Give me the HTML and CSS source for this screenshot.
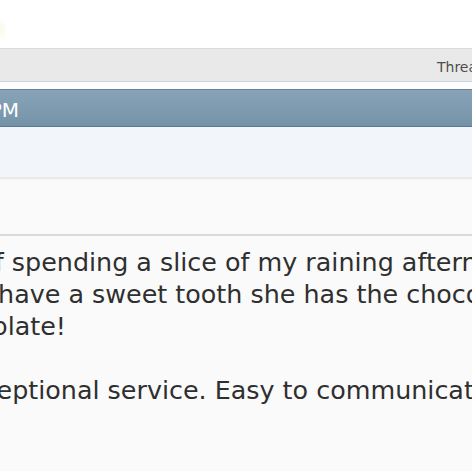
FILE: index.html
```html
<!DOCTYPE html>
<html>
<head>
<meta charset="utf-8">
<link rel="stylesheet" href="styles.css">
</head>
<body>
<div class="page">
  <header class="logo-area"><span class="logo-blob"></span></header>
  <nav class="navbar"><span class="nav-link">Thread Tools</span></nav>
  <div class="gap"></div>
  <div class="blockhead"><span class="date">, 05:12 PM</span></div>
  <div class="userinfo"></div>
  <div class="postmeta"></div>
  <div class="postbody">
    <p class="line">s of spending a slice of my raining afternoon</p>
    <p class="line">If I have a sweet tooth she has the chocolate</p>
    <p class="line">to plate!</p>
    <p class="line blank">&nbsp;</p>
    <p class="line line-indent">xceptional service. Easy to communicate with</p>
  </div>
</div>
</body>
</html>
```
FILE: styles.css
```css
html, body {
  margin: 0;
  padding: 0;
  background: #fafafa;
  overflow: hidden;
}
.page {
  width: 472px;
  height: 471px;
  overflow: hidden;
  font-family: "DejaVu Sans", Verdana, sans-serif;
}
.logo-area {
  height: 48px;
  background: #ffffff;
  position: relative;
}
.logo-blob {
  position: absolute;
  left: -6px;
  top: 12px;
  width: 12px;
  height: 34px;
  border-radius: 50%;
  background: radial-gradient(circle, #fbfaee 0%, #ffffff 80%);
}
.navbar {
  height: 32px;
  border-top: 1px solid #d9d9d9;
  border-bottom: 1px solid #c9d4de;
  background: #e9e9e9;
  display: flex;
  align-items: center;
  white-space: nowrap;
}
.nav-link {
  font-size: 14px;
  color: #4d4d4d;
  margin-left: 437px;
  padding-top: 3px;
}
.gap {
  height: 7px;
  background: #fdfdfd;
}
.blockhead {
  height: 36px;
  border-top: 1px solid #6a8498;
  border-bottom: 1px solid #5f7a8e;
  background: linear-gradient(#88a3b7, #7593a8);
  display: flex;
  align-items: center;
  white-space: nowrap;
}
.date {
  color: #ffffff;
  font-size: 20px;
  margin-left: -87px;
  padding-top: 3px;
}
.userinfo {
  height: 50px;
  background: #f2f5f9;
  border-bottom: 2px solid #e8ebe8;
}
.postmeta {
  height: 54px;
  background: #fafafa;
  border-top: 1px solid #f3f3f3;
  border-bottom: 2px solid #d9d9d9;
}
.postbody {
  padding-top: 10px;
  margin-left: -42px;
  color: #2f2f2f;
  font-size: 25.4px;
  line-height: 32px;
  white-space: nowrap;
}
.line {
  margin: 0;
}
.line-indent {
  text-indent: 10px;
}
```
